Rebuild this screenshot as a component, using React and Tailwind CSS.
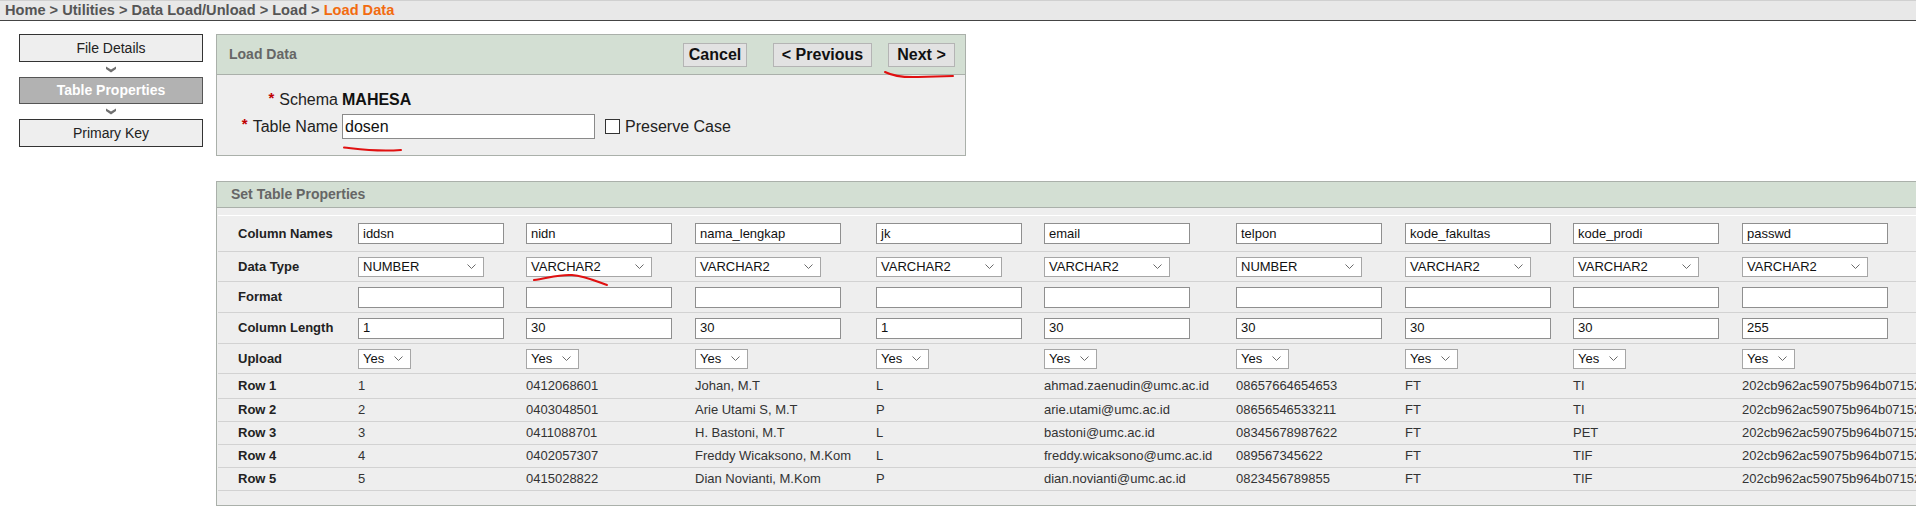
import React from "react";

const cols = [
  { name: "iddsn", type: "NUMBER", len: "1", w: 168 },
  { name: "nidn", type: "VARCHAR2", len: "30", w: 169 },
  { name: "nama_lengkap", type: "VARCHAR2", len: "30", w: 181 },
  { name: "jk", type: "VARCHAR2", len: "1", w: 168 },
  { name: "email", type: "VARCHAR2", len: "30", w: 192 },
  { name: "telpon", type: "NUMBER", len: "30", w: 169 },
  { name: "kode_fakultas", type: "VARCHAR2", len: "30", w: 168 },
  { name: "kode_prodi", type: "VARCHAR2", len: "30", w: 169 },
  { name: "passwd", type: "VARCHAR2", len: "255", w: 240 },
];

const pw = "202cb962ac59075b964b07152";

const rows = [
  ["1", "0412068601", "Johan, M.T", "L", "ahmad.zaenudin@umc.ac.id", "08657664654653", "FT", "TI", pw],
  ["2", "0403048501", "Arie Utami S, M.T", "P", "arie.utami@umc.ac.id", "08656546533211", "FT", "TI", pw],
  ["3", "0411088701", "H. Bastoni, M.T", "L", "bastoni@umc.ac.id", "08345678987622", "FT", "PET", pw],
  ["4", "0402057307", "Freddy Wicaksono, M.Kom", "L", "freddy.wicaksono@umc.ac.id", "089567345622", "FT", "TIF", pw],
  ["5", "0415028822", "Dian Novianti, M.Kom", "P", "dian.novianti@umc.ac.id", "0823456789855", "FT", "TIF", pw],
];

function NavChevron() {
  return (
    <svg width="10" height="7" viewBox="0 0 10 7">
      <path d="M0 0.5 L5 3.5 L10 0.5 L10 3 L5 6.5 L0 3 Z" fill="#707070" />
    </svg>
  );
}

function SelArrow() {
  return (
    <svg width="9" height="6" viewBox="0 0 9 6">
      <polyline points="0.5,0.5 4.5,4.5 8.5,0.5" fill="none" stroke="#6b6b6b" strokeWidth="1" />
    </svg>
  );
}

function Select({ value, w }) {
  return (
    <div
      className="h-[20px] bg-white border border-[#a6a6a6] flex items-center justify-between pl-[4px] pr-[7px] text-[13px] text-[#111]"
      style={{ width: w }}
    >
      <span>{value}</span>
      <SelArrow />
    </div>
  );
}

function TextBox({ value }) {
  return (
    <div className="w-[146px] h-[21px] bg-white border border-[#8f8f8f] flex items-center pl-[4px] text-[13px] text-[#111]">
      {value}
    </div>
  );
}

function Asterisk() {
  return <span className="text-[#c00000] text-[15px] font-bold leading-none mr-[5px] relative top-[-3px]">*</span>;
}

function Label({ children }) {
  return <div className="w-[140px] shrink-0 pl-[20px] text-[13px] font-bold text-[#222]">{children}</div>;
}

export default function App() {
  return (
    <div className="relative w-[1916px] h-[512px] overflow-hidden bg-white font-['Liberation_Sans',Arial,sans-serif] text-[#222]">
      {/* breadcrumb */}
      <div className="h-[21px] bg-[#e8e8e8] border-t border-[#d0d0d0] border-b border-b-[#444] flex items-center pl-[5px] text-[14.6px] font-bold text-[#555] whitespace-nowrap">
        <span>Home &gt; Utilities &gt; Data Load/Unload &gt; Load &gt;&nbsp;</span>
        <span className="text-[#f26b10]">Load Data</span>
      </div>

      <div className="flex pt-[13px]">
        {/* left nav */}
        <div className="w-[216px] pl-[19px] flex flex-col shrink-0">
          <div className="w-[184px] h-[28px] border border-[#333] bg-[#eeeeee] flex items-center justify-center text-[14px] text-[#222]">
            File Details
          </div>
          <div className="w-[184px] h-[15px] flex items-center justify-center">
            <NavChevron />
          </div>
          <div className="w-[184px] h-[27px] border border-[#555] bg-[#b2b2b2] flex items-center justify-center text-[14px] font-bold text-white">
            Table Properties
          </div>
          <div className="w-[184px] h-[15px] flex items-center justify-center">
            <NavChevron />
          </div>
          <div className="w-[184px] h-[28px] border border-[#333] bg-[#eeeeee] flex items-center justify-center text-[14px] text-[#222]">
            Primary Key
          </div>
        </div>

        {/* content */}
        <div className="flex flex-col shrink-0">
          {/* Load Data panel */}
          <div className="w-[750px] border border-[#aab0aa] bg-[#eeeeee]">
            <div className="h-[40px] bg-[#d3dfd3] border-b border-[#aab0aa] flex items-center pl-[12px] pr-[10px]">
              <span className="text-[14px] font-bold text-[#666]">Load Data</span>
              <div className="ml-auto flex items-center">
                <div className="w-[64px] h-[24px] bg-[#e2e2e2] border border-[#b4b4b4] flex items-center justify-center text-[16px] font-bold text-[#111]">
                  Cancel
                </div>
                <div className="ml-[26px] w-[99px] h-[24px] bg-[#e2e2e2] border border-[#b4b4b4] flex items-center justify-center text-[16px] font-bold text-[#111]">
                  &lt; Previous
                </div>
                <div className="ml-[16px] w-[67px] h-[24px] bg-[#e2e2e2] border border-[#b4b4b4] flex items-center justify-center text-[16px] font-bold text-[#111]">
                  Next &gt;
                </div>
              </div>
            </div>
            <div className="pt-[13px] pb-[16px] flex flex-col gap-[2px]">
              <div className="flex h-[24px] items-center">
                <div className="w-[121px] flex justify-end items-center text-[16px] text-[#222]">
                  <Asterisk />
                  <span>Schema</span>
                </div>
                <span className="ml-[4px] text-[16px] font-bold text-[#111]">MAHESA</span>
              </div>
              <div className="flex h-[25px] items-center">
                <div className="w-[121px] flex justify-end items-center text-[16px] text-[#222]">
                  <Asterisk />
                  <span>Table Name</span>
                </div>
                <div className="ml-[4px] w-[253px] h-[25px] bg-white border border-[#8a8a8a] flex items-center pl-[2px] text-[16px] text-[#111]">
                  dosen
                </div>
                <div className="ml-[10px] w-[15px] h-[15px] border border-[#333] bg-white" />
                <span className="ml-[5px] text-[16px] text-[#222]">Preserve Case</span>
              </div>
            </div>
          </div>

          {/* Set Table Properties panel */}
          <div className="mt-[25px] w-[1760px] border border-[#aab0aa] bg-[#eeeeee] pb-[14px]">
            <div className="h-[26px] bg-[#d3dfd3] border-b border-[#aab0aa] flex items-center pl-[14px]">
              <span className="text-[14px] font-bold text-[#666]">Set Table Properties</span>
            </div>
            <div className="pt-[7px] pl-[1px]">
              <div className="border-t border-white">
                <div className="flex h-[36px] items-center border-b border-[#d2d2d2]">
                  <Label>Column Names</Label>
                  {cols.map((c) => (
                    <div key={c.name} className="shrink-0" style={{ width: c.w }}>
                      <TextBox value={c.name} />
                    </div>
                  ))}
                </div>
                <div className="flex h-[30px] items-center border-b border-[#d2d2d2]">
                  <Label>Data Type</Label>
                  {cols.map((c) => (
                    <div key={c.name} className="shrink-0" style={{ width: c.w }}>
                      <Select value={c.type} w={126} />
                    </div>
                  ))}
                </div>
                <div className="flex h-[31px] items-center border-b border-[#d2d2d2]">
                  <Label>Format</Label>
                  {cols.map((c) => (
                    <div key={c.name} className="shrink-0" style={{ width: c.w }}>
                      <TextBox value="" />
                    </div>
                  ))}
                </div>
                <div className="flex h-[31px] items-center border-b border-[#d2d2d2]">
                  <Label>Column Length</Label>
                  {cols.map((c) => (
                    <div key={c.name} className="shrink-0" style={{ width: c.w }}>
                      <TextBox value={c.len} />
                    </div>
                  ))}
                </div>
                <div className="flex h-[30px] items-center border-b border-[#d2d2d2]">
                  <Label>Upload</Label>
                  {cols.map((c) => (
                    <div key={c.name} className="shrink-0" style={{ width: c.w }}>
                      <Select value="Yes" w={53} />
                    </div>
                  ))}
                </div>
                {rows.map((r, i) => (
                  <div
                    key={i}
                    className={
                      i === 0
                        ? "flex h-[25px] items-center border-b border-[#d2d2d2]"
                        : "flex h-[23px] items-center border-b border-[#d2d2d2]"
                    }
                  >
                    <Label>Row {i + 1}</Label>
                    {r.map((v, j) => (
                      <div
                        key={j}
                        className="shrink-0 whitespace-nowrap text-[13px] text-[#333]"
                        style={{ width: cols[j].w }}
                      >
                        {v}
                      </div>
                    ))}
                  </div>
                ))}
              </div>
            </div>
          </div>
        </div>
      </div>

      {/* red annotation marks */}
      <svg className="absolute left-0 top-0 pointer-events-none" width="1916" height="512">
        <path d="M885 72 C 895 77, 905 77.5, 918 77 L 953 76" fill="none" stroke="#e01010" strokeWidth="2" strokeLinecap="round" />
        <path d="M344 147.5 C 358 149, 375 152, 401 150" fill="none" stroke="#e01010" strokeWidth="2" strokeLinecap="round" />
        <path d="M534 280 C 548 278, 560 274, 572 275 C 585 276, 598 282, 607 285" fill="none" stroke="#e01010" strokeWidth="2" strokeLinecap="round" />
      </svg>
    </div>
  );
}
